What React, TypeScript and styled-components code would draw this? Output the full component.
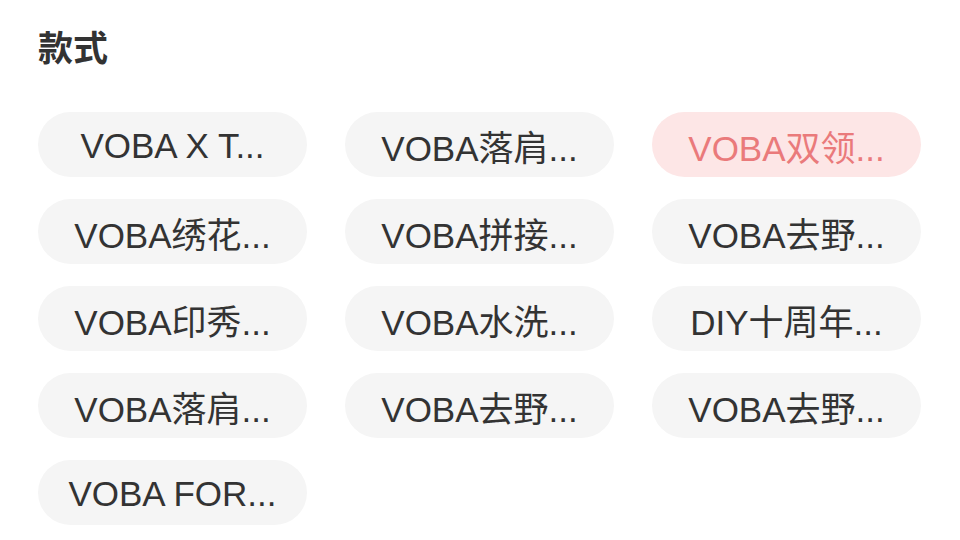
import React from 'react';
import styled, { createGlobalStyle } from 'styled-components';

const GlobalStyle = createGlobalStyle`
  html, body {
    margin: 0;
    padding: 0;
    background: #ffffff;
  }
  body {
    font-family: "Liberation Sans", Arial, "Noto Sans CJK SC", sans-serif;
  }
`;

const Page = styled.div`
  width: 960px;
  height: 540px;
  box-sizing: border-box;
  padding: 24px 39px 0 38px;
  overflow: hidden;
`;

const Title = styled.h2`
  margin: 0;
  font-size: 35px;
  line-height: 44px;
  font-weight: 700;
  color: #333333;
  font-family: "Noto Sans CJK SC", sans-serif;
`;

const Grid = styled.div`
  margin-top: 44px;
  display: grid;
  grid-template-columns: repeat(3, 269px);
  column-gap: 38px;
  row-gap: 22px;
`;

const Chip = styled.div<{ $active?: boolean }>`
  height: 65px;
  box-sizing: border-box;
  padding-top: 2px;
  border-radius: 33px;
  display: flex;
  align-items: center;
  justify-content: center;
  font-size: 35px;
  color: ${(p) => (p.$active ? '#ea7a7b' : '#333333')};
  background: ${(p) => (p.$active ? '#fde6e6' : '#f5f5f5')};
  white-space: nowrap;
  overflow: hidden;
`;

const styles = [
  'VOBA X T...',
  'VOBA落肩...',
  'VOBA双领...',
  'VOBA绣花...',
  'VOBA拼接...',
  'VOBA去野...',
  'VOBA印秀...',
  'VOBA水洗...',
  'DIY十周年...',
  'VOBA落肩...',
  'VOBA去野...',
  'VOBA去野...',
  'VOBA FOR...',
];

export default function App() {
  return (
    <>
      <GlobalStyle />
      <Page>
        <Title>款式</Title>
        <Grid>
          {styles.map((s, i) => (
            <Chip key={i} $active={i === 2}>
              {s}
            </Chip>
          ))}
        </Grid>
      </Page>
    </>
  );
}
